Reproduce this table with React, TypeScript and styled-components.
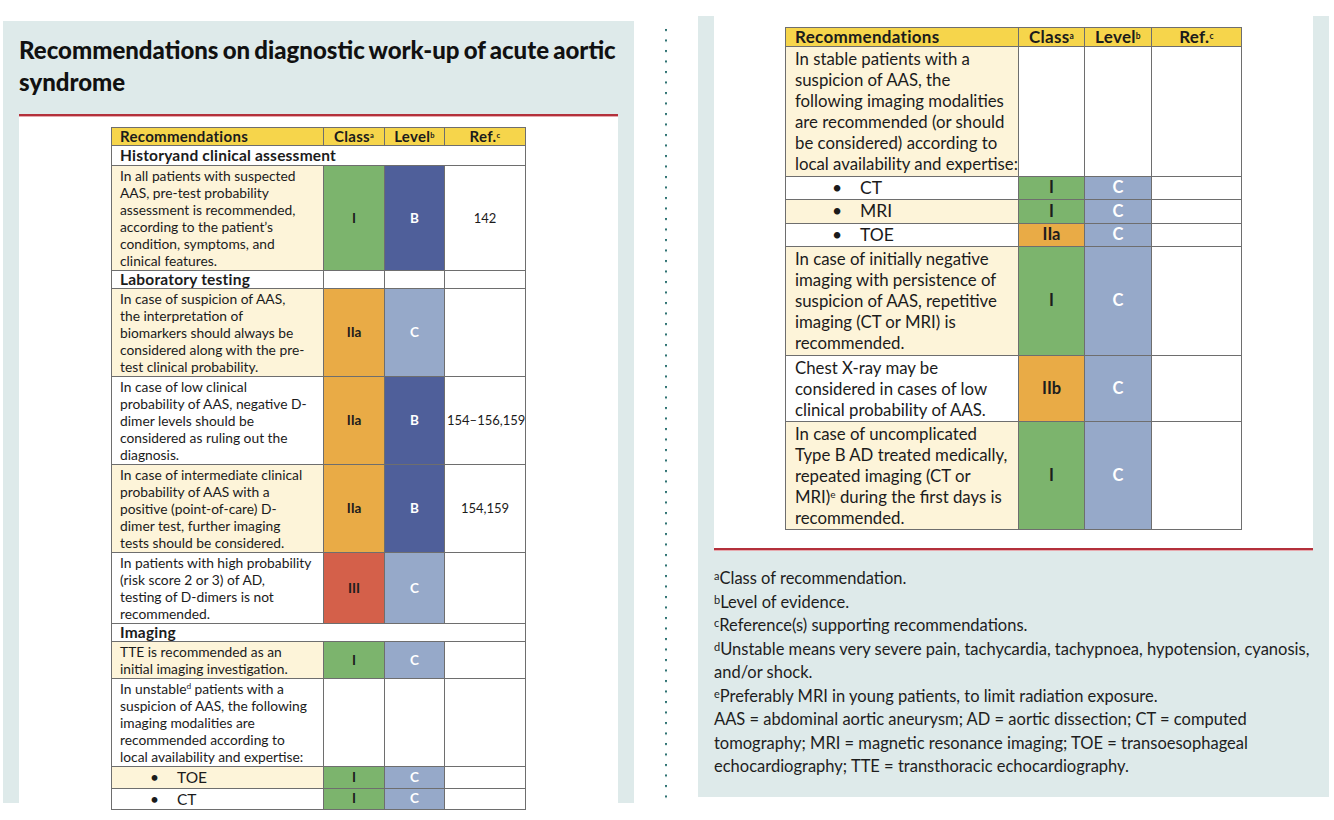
import React from 'react';
import styled, { createGlobalStyle } from 'styled-components';

const GlobalStyle = createGlobalStyle`
  html, body { margin: 0; padding: 0; background: #ffffff; }
  body { font-family: Lato, "Open Sans", "DejaVu Sans", sans-serif; color: #1b1b1b; }
  #root { width: 1334px; height: 820px; overflow: hidden; }
  * { box-sizing: border-box; }
`;

const PANEL = '#deeaea';
const BORDER = '#6e6e6e';
const COLORS: Record<string, string> = {
  I: '#7cb46d',
  IIa: '#e9ab46',
  IIb: '#e9ab46',
  III: '#d4604a',
  B: '#4f5f9a',
  C: '#96a9c9',
};

const Page = styled.div`
  display: flex;
  align-items: flex-start;
  width: 1334px;
  height: 820px;
  padding-left: 3px;
`;

const Panel = styled.section<{ $top: number; $height: number }>`
  margin-top: ${(p) => p.$top}px;
  width: 631px;
  height: ${(p) => p.$height}px;
  background: ${PANEL};
  padding: 0 16px;
  display: flex;
  flex-direction: column;
`;

const Title = styled.h1`
  margin: 0;
  padding: 13px 0 16px 0;
  font-family: Lato, "Open Sans", sans-serif;
  font-weight: 900;
  font-size: 24px;
  line-height: 32px;
  letter-spacing: 0;
  word-spacing: -1.5px;
  color: #111;
  white-space: nowrap;
`;

const Rule = styled.div`
  height: 3px;
  flex: none;
  background: linear-gradient(#b3303b 0 2px, #e6a9ae 2px 3px);
`;

const WhiteArea = styled.div<{ $pad: number; $grow?: boolean; $height?: number }>`
  background: #ffffff;
  padding-top: ${(p) => p.$pad}px;
  ${(p) => (p.$grow ? 'flex: 1;' : '')}
  ${(p) => (p.$height ? `height: ${p.$height}px; flex: none;` : '')}
  display: flex;
  justify-content: center;
  align-items: flex-start;
`;

const Divider = styled.div`
  width: 64px;
  display: flex;
  justify-content: center;
`;

const Dots = styled.div`
  width: 4px;
  height: 775px;
  margin-top: 28px;
  background-image: radial-gradient(circle at 2px 2px, #2f7272 1.1px, transparent 1.5px);
  background-size: 4px 10.5px;
`;

const Table = styled.table<{ $big?: boolean }>`
  border-collapse: collapse;
  table-layout: fixed;
  border: 1px solid ${BORDER};
  font-size: ${(p) => (p.$big ? 16.8 : 13.8)}px;
  line-height: ${(p) => (p.$big ? 21.1 : 17)}px;
  color: #1b1b1b;
`;

const Th = styled.th<{ $big?: boolean; $left?: boolean }>`
  background: #f6d54b;
  border: 1px solid ${BORDER};
  font-weight: 700;
  font-size: ${(p) => (p.$big ? 17 : 15)}px;
  letter-spacing: 0.3px;
  line-height: ${(p) => (p.$big ? 18 : 17)}px;
  text-align: ${(p) => (p.$left ? 'left' : 'center')};
  padding: 0 ${(p) => (p.$big ? 9 : 8)}px;
  white-space: nowrap;
  sup {
    font-size: 0.5em;
    vertical-align: top;
    position: relative;
    top: -1px;
  }
`;

const SectionCell = styled.td<{ $tall?: boolean }>`
  border: 1px solid ${BORDER};
  font-weight: 700;
  font-size: 15.5px;
  letter-spacing: 0.2px;
  line-height: ${(p) => (p.$tall ? 19 : 17)}px;
  padding: 0 8px;
  white-space: nowrap;
  background: #fff;
`;

const RecCell = styled.td<{ $cream?: boolean; $big?: boolean; $bullet?: boolean }>`
  border: 1px solid ${BORDER};
  background: ${(p) => (p.$cream ? '#fdf4d9' : '#ffffff')};
  padding: 1px ${(p) => (p.$big ? 9 : 8)}px;
  white-space: nowrap;
  vertical-align: top;
  ${(p) =>
    p.$bullet
      ? `font-size: ${p.$big ? 17.5 : 15.5}px; line-height: ${p.$big ? 20.5 : 18.5}px;`
      : ''}
  sup {
    font-size: 0.6em;
    vertical-align: top;
    position: relative;
    top: -2px;
  }
`;

const BulletMark = styled.span<{ $big?: boolean }>`
  display: inline-block;
  margin-left: ${(p) => (p.$big ? 37 : 30)}px;
  width: ${(p) => (p.$big ? 28 : 27)}px;
`;

const GradeCell = styled.td<{ $bg?: string; $light?: boolean; $big?: boolean }>`
  border: 1px solid ${BORDER};
  background: ${(p) => p.$bg || '#ffffff'};
  color: ${(p) => (p.$light ? '#ffffff' : '#1d1d1d')};
  font-weight: 700;
  font-size: ${(p) => (p.$big ? 16.5 : 13.5)}px;
  text-align: center;
  vertical-align: middle;
  padding: 0;
  white-space: nowrap;
`;

const RefCell = styled.td`
  border: 1px solid ${BORDER};
  background: #ffffff;
  text-align: center;
  vertical-align: middle;
  padding: 0 2px;
  white-space: nowrap;
  font-size: 13px;
`;

const Notes = styled.div`
  padding-top: 16px;
  font-size: 16.5px;
  line-height: 23.5px;
  color: #1d1d1d;
  white-space: nowrap;
  sup {
    font-size: 11px;
    vertical-align: top;
    position: relative;
    top: -3px;
  }
`;

const NoteLine = styled.div``;

type Row =
  | { kind: 'section'; text: string; split?: boolean; tall?: boolean }
  | {
      kind: 'rec';
      lines: React.ReactNode[];
      cls?: string;
      level?: string;
      ref?: string;
      cream?: boolean;
      bullet?: boolean;
    };

const leftRows: Row[] = [
  { kind: 'section', text: 'Historyand clinical assessment', tall: true },
  {
    kind: 'rec',
    cream: true,
    lines: [
      'In all patients with suspected',
      'AAS, pre-test probability',
      'assessment is recommended,',
      'according to the patient\u2019s',
      'condition, symptoms, and',
      'clinical features.',
    ],
    cls: 'I',
    level: 'B',
    ref: '142',
  },
  { kind: 'section', text: 'Laboratory testing', split: true },
  {
    kind: 'rec',
    cream: true,
    lines: [
      'In case of suspicion of AAS,',
      'the interpretation of',
      'biomarkers should always be',
      'considered along with the pre-',
      'test clinical probability.',
    ],
    cls: 'IIa',
    level: 'C',
  },
  {
    kind: 'rec',
    lines: [
      'In case of low clinical',
      'probability of AAS, negative D-',
      'dimer levels should be',
      'considered as ruling out the',
      'diagnosis.',
    ],
    cls: 'IIa',
    level: 'B',
    ref: '154\u2013156,159',
  },
  {
    kind: 'rec',
    cream: true,
    lines: [
      'In case of intermediate clinical',
      'probability of AAS with a',
      'positive (point-of-care) D-',
      'dimer test, further imaging',
      'tests should be considered.',
    ],
    cls: 'IIa',
    level: 'B',
    ref: '154,159',
  },
  {
    kind: 'rec',
    lines: [
      'In patients with high probability',
      '(risk score 2 or 3) of AD,',
      'testing of D-dimers is not',
      'recommended.',
    ],
    cls: 'III',
    level: 'C',
  },
  { kind: 'section', text: 'Imaging' },
  {
    kind: 'rec',
    cream: true,
    lines: ['TTE is recommended as an', 'initial imaging investigation.'],
    cls: 'I',
    level: 'C',
  },
  {
    kind: 'rec',
    lines: [
      <>
        In unstable<sup>d</sup> patients with a
      </>,
      'suspicion of AAS, the following',
      'imaging modalities are',
      'recommended according to',
      'local availability and expertise:',
    ],
  },
  { kind: 'rec', cream: true, bullet: true, lines: ['TOE'], cls: 'I', level: 'C' },
  { kind: 'rec', bullet: true, lines: ['CT'], cls: 'I', level: 'C' },
];

const rightRows: Row[] = [
  {
    kind: 'rec',
    cream: true,
    lines: [
      'In stable patients with a',
      'suspicion of AAS, the',
      'following imaging modalities',
      'are recommended (or should',
      'be considered) according to',
      'local availability and expertise:',
    ],
  },
  { kind: 'rec', bullet: true, lines: ['CT'], cls: 'I', level: 'C' },
  { kind: 'rec', cream: true, bullet: true, lines: ['MRI'], cls: 'I', level: 'C' },
  { kind: 'rec', bullet: true, lines: ['TOE'], cls: 'IIa', level: 'C' },
  {
    kind: 'rec',
    cream: true,
    lines: [
      'In case of initially negative',
      'imaging with persistence of',
      'suspicion of AAS, repetitive',
      'imaging (CT or MRI) is',
      'recommended.',
    ],
    cls: 'I',
    level: 'C',
  },
  {
    kind: 'rec',
    lines: ['Chest X-ray may be', 'considered in cases of low', 'clinical probability of AAS.'],
    cls: 'IIb',
    level: 'C',
  },
  {
    kind: 'rec',
    cream: true,
    lines: [
      'In case of uncomplicated',
      'Type B AD treated medically,',
      'repeated imaging (CT or',
      <>
        MRI)<sup>e</sup> during the first days is
      </>,
      'recommended.',
    ],
    cls: 'I',
    level: 'C',
  },
];

const RecTable: React.FC<{ rows: Row[]; widths: number[]; big?: boolean }> = ({ rows, widths, big }) => (
  <Table $big={big} style={{ width: widths.reduce((a, b) => a + b, 0) }}>
    <colgroup>
      {widths.map((w, i) => (
        <col key={i} style={{ width: w }} />
      ))}
    </colgroup>
    <thead>
      <tr>
        <Th $big={big} $left>
          Recommendations
        </Th>
        <Th $big={big}>
          Class<sup>a</sup>
        </Th>
        <Th $big={big}>
          Level<sup>b</sup>
        </Th>
        <Th $big={big}>
          Ref.<sup>c</sup>
        </Th>
      </tr>
    </thead>
    <tbody>
      {rows.map((r, i) => {
        if (r.kind === 'section') {
          return r.split ? (
            <tr key={i}>
              <SectionCell $tall={r.tall}>{r.text}</SectionCell>
              <RefCell />
              <RefCell />
              <RefCell />
            </tr>
          ) : (
            <tr key={i}>
              <SectionCell $tall={r.tall} colSpan={4}>
                {r.text}
              </SectionCell>
            </tr>
          );
        }
        return (
          <tr key={i}>
            <RecCell $cream={r.cream} $big={big} $bullet={r.bullet}>
              {r.bullet ? (
                <>
                  <BulletMark $big={big}>•</BulletMark>
                  {r.lines[0]}
                </>
              ) : (
                r.lines.map((l, j) => (
                  <React.Fragment key={j}>
                    {l}
                    {j < r.lines.length - 1 && <br />}
                  </React.Fragment>
                ))
              )}
            </RecCell>
            <GradeCell $big={big} $bg={r.cls ? COLORS[r.cls] : undefined}>
              {r.cls}
            </GradeCell>
            <GradeCell $big={big} $light $bg={r.level ? COLORS[r.level] : undefined}>
              {r.level}
            </GradeCell>
            <RefCell>{r.ref}</RefCell>
          </tr>
        );
      })}
    </tbody>
  </Table>
);

export default function App() {
  return (
    <>
      <GlobalStyle />
      <Page>
        <Panel $top={21} $height={782}>
          <Title>
            Recommendations on diagnostic work-up of acute aortic
            <br />
            syndrome
          </Title>
          <Rule />
          <WhiteArea $pad={10} $grow>
            <RecTable rows={leftRows} widths={[212, 61, 60, 81]} />
          </WhiteArea>
        </Panel>
        <Divider>
          <Dots />
        </Divider>
        <Panel $top={16} $height={781}>
          <WhiteArea $pad={11} $height={532}>
            <RecTable rows={rightRows} widths={[233, 66, 67, 90]} big />
          </WhiteArea>
          <Rule />
          <Notes>
            <NoteLine>
              <sup>a</sup>Class of recommendation.
            </NoteLine>
            <NoteLine>
              <sup>b</sup>Level of evidence.
            </NoteLine>
            <NoteLine>
              <sup>c</sup>Reference(s) supporting recommendations.
            </NoteLine>
            <NoteLine>
              <sup>d</sup>Unstable means very severe pain, tachycardia, tachypnoea, hypotension, cyanosis,
            </NoteLine>
            <NoteLine>and/or shock.</NoteLine>
            <NoteLine>
              <sup>e</sup>Preferably MRI in young patients, to limit radiation exposure.
            </NoteLine>
            <NoteLine>AAS = abdominal aortic aneurysm; AD = aortic dissection; CT = computed</NoteLine>
            <NoteLine>tomography; MRI = magnetic resonance imaging; TOE = transoesophageal</NoteLine>
            <NoteLine>echocardiography; TTE = transthoracic echocardiography.</NoteLine>
          </Notes>
        </Panel>
      </Page>
    </>
  );
}
